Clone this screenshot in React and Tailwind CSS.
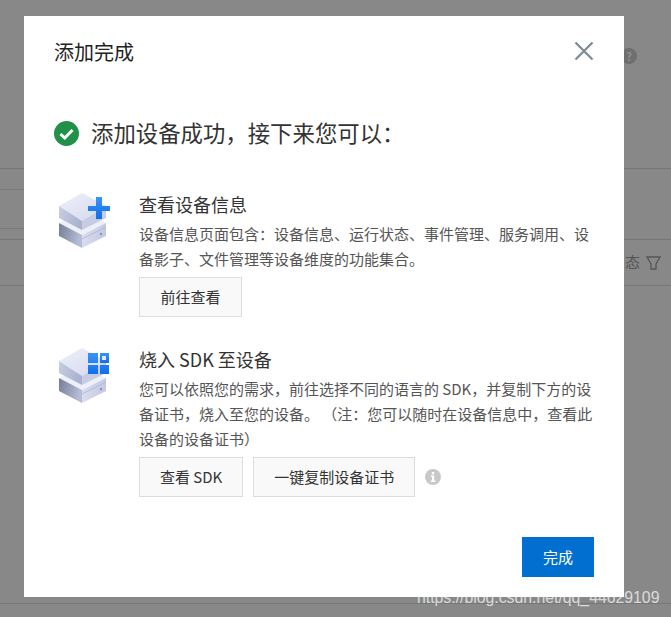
import React from "react";

const font = { fontFamily: '"Noto Sans CJK SC", sans-serif' };

// stacked server boxes shared by both rows, the badge differs
function BoxIcon({ id, children }) {
  return (
    <svg width="60" height="62" viewBox="0 0 60 62" className="shrink-0">
      <defs>
        <linearGradient id={`${id}-top`} x1="0" y1="0" x2="1" y2="1">
          <stop offset="0" stopColor="#eef0f9" />
          <stop offset="1" stopColor="#d3d9ee" />
        </linearGradient>
        <linearGradient id={`${id}-left`} x1="0" y1="0" x2="1" y2="0.4">
          <stop offset="0" stopColor="#c9cee0" />
          <stop offset="1" stopColor="#a9b2cf" />
        </linearGradient>
        <linearGradient id={`${id}-low`} x1="0" y1="0" x2="1" y2="0.3">
          <stop offset="0" stopColor="#767d96" />
          <stop offset="1" stopColor="#b4bcd6" />
        </linearGradient>
        <linearGradient id={`${id}-right`} x1="0" y1="0" x2="1" y2="0">
          <stop offset="0" stopColor="#d9ddef" />
          <stop offset="1" stopColor="#c2c9e2" />
        </linearGradient>
        <linearGradient id={`${id}-blue`} x1="0" y1="0" x2="0" y2="1">
          <stop offset="0" stopColor="#3a93f7" />
          <stop offset="1" stopColor="#0f6fec" />
        </linearGradient>
      </defs>
      {/* lower box */}
      <path d="M5 34 L28 22 L52 34 L28 46 Z" fill="#eef0f9" />
      <path d="M5 34 L5 47 L28 59 L28 46 Z" fill={`url(#${id}-low)`} />
      <path d="M28 46 L52 34 L52 47 L28 59 Z" fill={`url(#${id}-right)`} />
      <path d="M28 50 L52 38" stroke="#b5bcd5" strokeWidth="1" />
      <circle cx="47" cy="45" r="1.2" fill="#8a92ad" />
      {/* upper box */}
      <path d="M5 17 L28 4 L52 17 L28 32 Z" fill={`url(#${id}-top)`} />
      <path d="M5 17 L5 29 L28 41 L28 32 Z" fill={`url(#${id}-left)`} />
      <path d="M28 32 L52 17 L52 29 L28 41 Z" fill="#c6cce3" />
      {children}
    </svg>
  );
}

function OutlineButton({ children }) {
  return (
    <button className="h-10 min-w-[103px] px-5 border border-[#dddddd] bg-[#f9f9f9] text-[15px] text-[#333333]">
      {children}
    </button>
  );
}

export default function App() {
  return (
    <div className="relative h-[617px] overflow-hidden bg-[#888888]" style={font}>
      {/* dimmed page behind the dialog */}
      <div className="h-[169px] border-b border-[#767676]" />
      <div className="h-[71px] pt-5 border-b border-[#767676]">
        <div className="w-6 h-[40px] border-y border-[#7c7c7c]" />
      </div>
      <div className="h-[46px] border-b border-[#767676] flex items-center justify-end pr-[10px] gap-[6px] text-[15px] text-[#555555]">
        <span>态</span>
        <svg width="15" height="16" viewBox="0 0 15 16" fill="none" stroke="#555555" strokeWidth="1.3">
          <path d="M1 2 H14 L10 9 V14 H5 V9 Z" />
        </svg>
      </div>
      <div className="h-[318px] border-b border-[#767676]" />

      {/* help mark peeking out beside the dialog */}
      <div className="absolute left-[621px] top-[48px] w-4 h-4 rounded-full bg-[#6f6f6f] flex items-center justify-center text-[11px] font-bold text-[#8f8f8f] leading-none">
        ?
      </div>

      {/* dialog */}
      <div className="absolute left-6 top-4 w-[600px] h-[581px] bg-white px-[30px] flex flex-col">
        <div className="flex items-center justify-between h-[72px]">
          <h1 className="text-[20px] font-normal text-[#222222]">添加完成</h1>
          <svg width="20" height="20" viewBox="0 0 20 20" className="-mt-0.5" stroke="#7b8a94" strokeWidth="2.2">
            <path d="M1.5 1.5 L18.5 18.5 M18.5 1.5 L1.5 18.5" />
          </svg>
        </div>

        <div className="flex items-center gap-[12px] mt-[23px] h-10">
          <svg width="25" height="25" viewBox="0 0 25 25" className="shrink-0 mt-1">
            <circle cx="12.5" cy="12.5" r="12.5" fill="#21914a" />
            <path d="M6.5 13 L10.8 17 L18.5 9" fill="none" stroke="#ffffff" strokeWidth="3" />
          </svg>
          <h2 className="text-[22.4px] font-normal text-[#333333] mt-[3px] [text-spacing-trim:space-all]">添加设备成功，接下来您可以：</h2>
        </div>

        <div className="flex mt-[40px]">
          <div className="w-[85px] shrink-0 -mt-[2px]">
            <BoxIcon id="a">
              <path d="M34 17 H56 V22 H34 Z M42 8 H48 V30 H42 Z" fill="url(#a-blue)" />
            </BoxIcon>
          </div>
          <div className="flex-1">
            <h3 className="text-[18px] font-normal text-[#333333] leading-[26px]">查看设备信息</h3>
            <p className="text-[15px] text-[#555555] leading-[25px] mt-1 w-[456px] [text-spacing-trim:space-all]">
              设备信息页面包含：设备信息、运行状态、事件管理、服务调用、设备影子、文件管理等设备维度的功能集合。
            </p>
            <div className="mt-[6px]">
              <OutlineButton>前往查看</OutlineButton>
            </div>
          </div>
        </div>

        <div className="flex mt-[29px]">
          <div className="w-[85px] shrink-0 -mt-[2px]">
            <BoxIcon id="b">
              <path d="M34 9 H44 V19 H34 Z M34 21 H44 V30 H34 Z M46 21 H55 V30 H46 Z" fill="url(#b-blue)" />
              <path d="M46 9 H55 V19 H46 Z" fill="url(#b-blue)" />
              <path d="M48 12 H52 V16 H48 Z" fill="#dfe8fb" />
            </BoxIcon>
          </div>
          <div className="flex-1">
            <h3 className="text-[18px] font-normal text-[#333333] leading-[26px]">烧入 SDK 至设备</h3>
            <p className="text-[15px] text-[#555555] leading-[25px] mt-1 w-[456px] [text-spacing-trim:space-all]">
              您可以依照您的需求，前往选择不同的语言的 SDK，并复制下方的设备证书，烧入至您的设备。 （注：您可以随时在设备信息中，查看此设备的设备证书）
            </p>
            <div className="mt-[6px] flex items-center gap-[10px]">
              <OutlineButton>查看 SDK</OutlineButton>
              <OutlineButton>一键复制设备证书</OutlineButton>
              <svg width="16" height="16" viewBox="0 0 16 16">
                <circle cx="8" cy="8" r="8" fill="#c8c8c8" />
                <rect x="6.8" y="3" width="2.4" height="2.4" fill="#ffffff" />
                <path d="M5.8 6.6 H9.2 V11.6 H10.4 V13 H5.8 V11.6 H7 V8 H5.8 Z" fill="#ffffff" />
              </svg>
            </div>
          </div>
        </div>

        <div className="flex justify-end mt-[40px]">
          <button className="w-[72px] h-10 bg-[#006fcf] text-[15px] text-white">完成</button>
        </div>
      </div>

      {/* watermark */}
      <div
        className="absolute left-[417px] top-[588px] text-[15.8px] leading-[20px] text-white/70"
        style={{ fontFamily: '"Liberation Sans", sans-serif' }}
      >
        https://blog.csdn.net/qq_44629109
      </div>
    </div>
  );
}
